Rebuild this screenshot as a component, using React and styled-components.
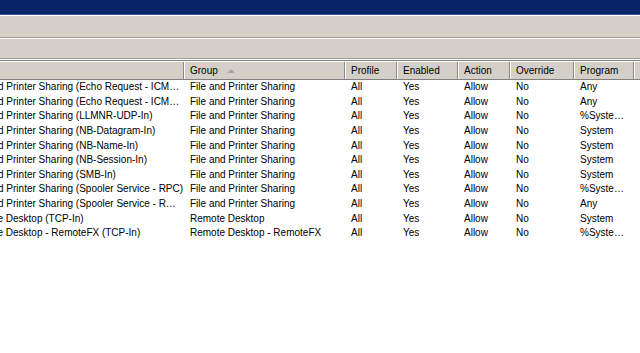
import React from 'react';
import styled, { createGlobalStyle } from 'styled-components';

// name column is scrolled: part of it sits left of the viewport
const SCROLL_X = 38;
const COLUMNS = [
  { key: 'name', title: 'Name', width: 184 + SCROLL_X },
  { key: 'group', title: 'Group', width: 161, sorted: true },
  { key: 'profile', title: 'Profile', width: 52 },
  { key: 'enabled', title: 'Enabled', width: 61 },
  { key: 'action', title: 'Action', width: 52 },
  { key: 'override', title: 'Override', width: 64 },
  { key: 'program', title: 'Program', width: 60 },
  { key: 'rest', title: '', width: 90 }
];

const FPS = 'File and Printer Sharing';

const RULES = [
  { name: `${FPS} (Echo Request - ICM…`, group: FPS, program: 'Any' },
  { name: `${FPS} (Echo Request - ICM…`, group: FPS, program: 'Any' },
  { name: `${FPS} (LLMNR-UDP-In)`, group: FPS, program: '%Syste…' },
  { name: `${FPS} (NB-Datagram-In)`, group: FPS, program: 'System' },
  { name: `${FPS} (NB-Name-In)`, group: FPS, program: 'System' },
  { name: `${FPS} (NB-Session-In)`, group: FPS, program: 'System' },
  { name: `${FPS} (SMB-In)`, group: FPS, program: 'System' },
  { name: `${FPS} (Spooler Service - RPC)`, group: FPS, program: '%Syste…' },
  { name: `${FPS} (Spooler Service - R…`, group: FPS, program: 'Any' },
  { name: 'Remote Desktop (TCP-In)', group: 'Remote Desktop', program: 'System' },
  { name: 'Remote Desktop - RemoteFX (TCP-In)', group: 'Remote Desktop - RemoteFX', program: '%Syste…' }
];

const GRID = COLUMNS.map((c) => `${c.width}px`).join(' ');

const GlobalStyle = createGlobalStyle`
  html, body {
    margin: 0;
    padding: 0;
    background: #ffffff;
    overflow: hidden;
  }
  body {
    font-family: "Liberation Sans", Arial, sans-serif;
    font-size: 10px;
    color: #000000;
  }
`;

const Window = styled.div`
  width: 640px;
  height: 353px;
  display: flex;
  flex-direction: column;
  background: #ffffff;
  overflow: hidden;
`;

const TitleBar = styled.div`
  height: 14px;
  background: #0a246a;
  border-bottom: 1px solid #3a5291;
`;

const Band = styled.div`
  height: ${(props) => props.height}px;
  background: #d4d0c8;
  border-top: 1px solid #ffffff;
  border-bottom: 1px solid #a09d96;
`;

const ListView = styled.div`
  flex: 1;
  overflow: hidden;
  border-top: 1px solid #808080;
  margin-top: 1px;
`;

const Table = styled.div`
  margin-left: -${SCROLL_X}px;
`;

const HeaderRow = styled.div`
  display: grid;
  grid-template-columns: ${GRID};
  height: 17px;
  background: #d4d0c8;
  border-bottom: 1px solid #808080;
  border-top: 1px solid #ffffff;
`;

const HeaderCell = styled.div`
  display: flex;
  align-items: center;
  gap: 9px;
  padding-left: 5px;
  padding-top: 1px;
  border-left: 1px solid #ffffff;
  border-right: 1px solid #8c8a85;
  white-space: nowrap;
  overflow: hidden;
  line-height: 1;
`;

const SortArrow = styled.span`
  width: 0;
  height: 0;
  margin-top: -1px;
  border-left: 4px solid transparent;
  border-right: 4px solid transparent;
  border-bottom: 4px solid #a7a6a2;
`;

const Row = styled.div`
  display: grid;
  grid-template-columns: ${GRID};
  height: 14.6px;
  align-items: center;
`;

const Cell = styled.div`
  padding-left: 6px;
  white-space: nowrap;
  overflow: hidden;
  line-height: 1;
`;

const App = () => (
  <React.Fragment>
    <GlobalStyle />
    <Window>
      <TitleBar />
      <Band height={21} />
      <Band height={19} />
      <ListView>
        <Table>
          <HeaderRow>
            {COLUMNS.map(({ key, title, sorted }) => (
              <HeaderCell key={key}>
                {title}
                {sorted && <SortArrow />}
              </HeaderCell>
            ))}
          </HeaderRow>
          {RULES.map((rule, i) => (
            <Row key={i}>
              <Cell>{rule.name}</Cell>
              <Cell>{rule.group}</Cell>
              <Cell>All</Cell>
              <Cell>Yes</Cell>
              <Cell>Allow</Cell>
              <Cell>No</Cell>
              <Cell>{rule.program}</Cell>
              <Cell />
            </Row>
          ))}
        </Table>
      </ListView>
    </Window>
  </React.Fragment>
);

export default App;
